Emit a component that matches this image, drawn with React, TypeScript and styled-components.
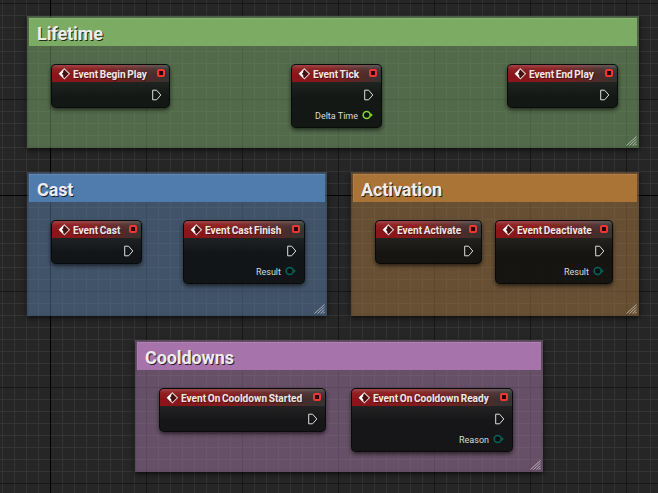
import React from "react";
import styled, { createGlobalStyle } from "styled-components";

const GlobalStyle = createGlobalStyle`
  body { margin: 0; background: #262626; overflow: hidden; }
  * { box-sizing: border-box; }
`;

const Canvas = styled.main`
  position: relative;
  width: 658px;
  height: 493px;
  overflow: hidden;
  font-family: Roboto, "Liberation Sans", sans-serif;
  background:
    linear-gradient(#000, #000) 50px 0 / 1px 100% no-repeat,
    linear-gradient(#000, #000) 0 195px / 100% 1px no-repeat,
    linear-gradient(90deg, #171717 1px, transparent 1px) 50px 0 / 96px 96px,
    linear-gradient(#171717 1px, transparent 1px) 0 3px / 96px 96px,
    linear-gradient(90deg, #343434 1px, transparent 1px) 2px 0 / 12px 12px,
    linear-gradient(#343434 1px, transparent 1px) 0 3px / 12px 12px,
    #262626;
`;

interface Box { x: number; y: number; w: number; h: number }

const Comment = styled.section<{ $box: Box; $body: string }>`
  position: absolute;
  left: ${(p) => p.$box.x}px;
  top: ${(p) => p.$box.y}px;
  width: ${(p) => p.$box.w}px;
  height: ${(p) => p.$box.h}px;
  padding: 2px;
  background: rgba(${(p) => p.$body}, 0.5);
  box-shadow: 0 2px 5px rgba(0, 0, 0, 0.65), inset 0 0 2px 1px rgba(0, 0, 0, 0.14);
`;

const CommentTitle = styled.h2<{ $fill: string }>`
  display: flex;
  align-items: center;
  height: 28px;
  margin: 0;
  padding: 3px 0 0 8px;
  background: rgb(${(p) => p.$fill});
  box-shadow: inset 0 1px rgba(255, 255, 255, 0.1), inset 1px 0 rgba(255, 255, 255, 0.06);
  color: #ededed;
  font-size: 18px;
  font-weight: 700;
  line-height: 24px;
  letter-spacing: -0.1px;
  text-shadow: 1px 1px 0 rgba(0, 0, 0, 0.75);
`;

const Grip = styled.svg`
  position: absolute;
  right: 2px;
  bottom: 2px;
`;

const Node = styled.article<{ $box: Box }>`
  position: absolute;
  left: ${(p) => p.$box.x}px;
  top: ${(p) => p.$box.y}px;
  width: ${(p) => p.$box.w}px;
  height: ${(p) => p.$box.h}px;
  padding: 1px;
  border-radius: 5px;
  background: rgba(6, 7, 7, 0.84);
  box-shadow: 0 2px 4px rgba(0, 0, 0, 0.6), inset 0 0 0 1px rgba(0, 0, 0, 0.5);
`;

const NodeInner = styled.div`
  height: 100%;
  border-radius: 4px;
  overflow: hidden;
  background: linear-gradient(rgba(50, 54, 52, 0.42) 17px, rgba(24, 26, 25, 0.32) 32px);
`;

const NodeHeader = styled.header`
  display: flex;
  align-items: center;
  height: 17px;
  padding: 0 4px 0 6px;
  background:
    linear-gradient(rgba(255, 255, 255, 0.2), rgba(255, 255, 255, 0.05) 4px, transparent 10px),
    linear-gradient(90deg, #8b1518, #841a1c 40%, #5d2625 72%, #333331);
  svg { flex: none; }
`;

const NodeTitle = styled.h3`
  flex: 1;
  width: 0;
  margin: 2px 0 0 2px;
  color: #f0e9e8;
  font-size: 11.5px;
  font-weight: 700;
  line-height: 15px;
  word-spacing: -1px;
  white-space: nowrap;
  text-shadow: 1px 1px 0 rgba(0, 0, 0, 0.4);
`;

const TitleText = styled.span`
  display: inline-block;
  transform: scaleX(0.877);
  transform-origin: left;
`;

const Delegate = styled.i`
  flex: none;
  width: 8px;
  height: 8px;
  margin-bottom: 1px;
  border: 2px solid #f03535;
  border-radius: 2px;
  background: #250505;
`;

const Pins = styled.div`
  display: grid;
  grid-template-rows: 26px 14px;
  justify-items: end;
  align-items: center;
  padding-right: 7px;
`;

const DataPin = styled.div`
  display: flex;
  align-items: center;
  gap: 4px;
  color: #dcdcdc;
  font-size: 9px;
  line-height: 12px;
`;

const PinLabel = styled.span`
  padding-top: 1px;
`;

const EventIcon = () => (
  <svg width="13" height="13" viewBox="0 0 13 13" fill="none">
    <path d="M6.4 1.8 11.4 6.8 6.4 11.8 1.4 6.8Z" fill="#43100f" stroke="#e2cccc" strokeWidth="1.1" />
    <path d="M5.2 2.6 1 6.8l4.2 4.2V8.3L3.9 6.8 5.2 5.3Z" fill="#fff" />
  </svg>
);

const ExecPin = () => (
  <svg width="10" height="12" viewBox="0 0 10 12" fill="none">
    <path d="M.7 1.2H4.6L8.8 6 4.6 10.8H.7Z" stroke="#dedede" strokeWidth="1" strokeLinejoin="round" />
  </svg>
);

const ValuePin = ({ color }: { color: string }) => (
  <svg width="12" height="10" viewBox="0 0 12 10">
    <circle cx="4.7" cy="5" r="3.5" fill="#0b1010" stroke={color} strokeWidth="1.6" />
    <path d="M8.7 3 10.7 5 8.7 7Z" fill={color} />
  </svg>
);

interface Group { title: string; fill: string; body: string; box: Box }
interface EventNode { title: string; box: Box; pin?: string; pinColor?: string }

const groups: Group[] = [
  { title: "Lifetime", fill: "124,171,100", body: "126,172,110", box: { x: 27, y: 16, w: 612, h: 132 } },
  { title: "Cast", fill: "80,124,173", body: "90,128,170", box: { x: 27, y: 172, w: 300, h: 144 } },
  { title: "Activation", fill: "171,116,55", body: "168,120,64", box: { x: 351, y: 172, w: 288, h: 144 } },
  { title: "Cooldowns", fill: "166,116,171", body: "166,122,168", box: { x: 135, y: 340, w: 408, h: 132 } },
];

const TEAL = "#04665a";
const nodes: EventNode[] = [
  { title: "Event Begin Play", box: { x: 51, y: 64, w: 119, h: 44 } },
  { title: "Event Tick", box: { x: 291, y: 64, w: 91, h: 64 }, pin: "Delta Time", pinColor: "#84d92c" },
  { title: "Event End Play", box: { x: 507, y: 64, w: 111, h: 44 } },
  { title: "Event Cast", box: { x: 51, y: 220, w: 91, h: 44 } },
  { title: "Event Cast Finish", box: { x: 183, y: 220, w: 122, h: 64 }, pin: "Result", pinColor: TEAL },
  { title: "Event Activate", box: { x: 375, y: 220, w: 107, h: 44 } },
  { title: "Event Deactivate", box: { x: 495, y: 220, w: 118, h: 64 }, pin: "Result", pinColor: TEAL },
  { title: "Event On Cooldown Started", box: { x: 159, y: 388, w: 167, h: 44 } },
  { title: "Event On Cooldown Ready", box: { x: 351, y: 388, w: 162, h: 64 }, pin: "Reason", pinColor: TEAL },
];

export default function App() {
  return (
    <>
      <GlobalStyle />
      <Canvas>
        {groups.map((g) => (
          <Comment key={g.title} $box={g.box} $body={g.body}>
            <CommentTitle $fill={g.fill}>{g.title}</CommentTitle>
            <Grip width="11" height="10" viewBox="0 0 11 10" stroke="#fff" strokeOpacity=".55" strokeWidth="1">
              <path d="M.5 9.5 10.5 .5M3.5 9.5 10.5 3M6.5 9.5 10.5 5.8M9 9.5 10.5 8" />
            </Grip>
          </Comment>
        ))}
        {nodes.map((n) => (
          <Node key={n.title} $box={n.box}>
            <NodeInner>
              <NodeHeader>
                <EventIcon />
                <NodeTitle><TitleText>{n.title}</TitleText></NodeTitle>
                <Delegate />
              </NodeHeader>
              <Pins>
                <ExecPin />
                {n.pin && n.pinColor && (
                  <DataPin><PinLabel>{n.pin}</PinLabel><ValuePin color={n.pinColor} /></DataPin>
                )}
              </Pins>
            </NodeInner>
          </Node>
        ))}
      </Canvas>
    </>
  );
}
